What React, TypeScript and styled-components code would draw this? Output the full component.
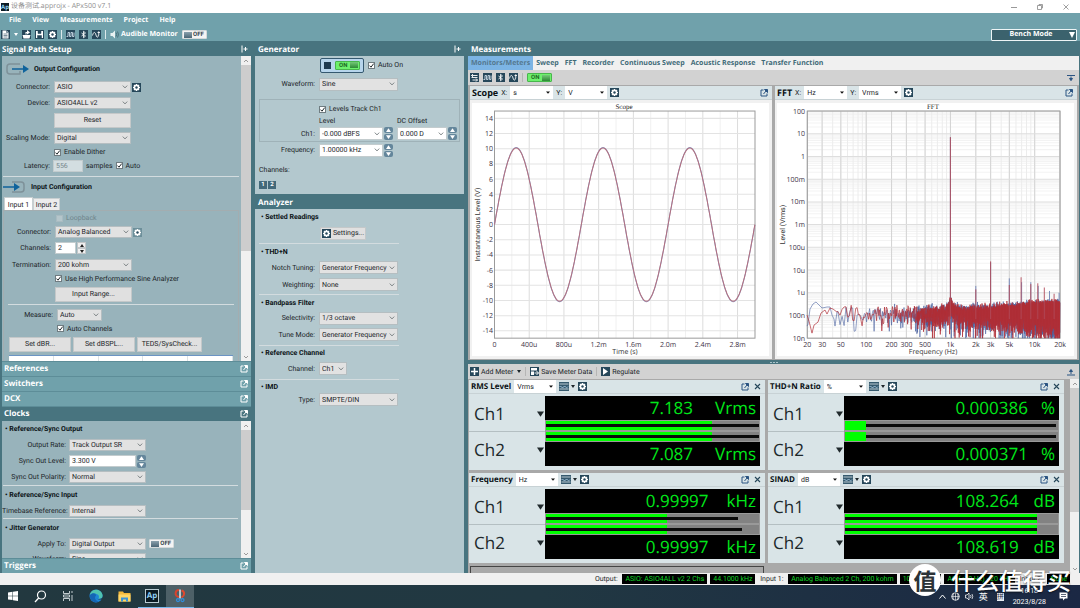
import React from 'react';
import styled, { createGlobalStyle, css } from 'styled-components';

const Global = createGlobalStyle`
  * { box-sizing: border-box; }
  html, body { margin: 0; height: 100%; }
  body {
    font-family: Roboto, "Noto Sans CJK SC", sans-serif;
    font-size: 7px;
    line-height: 10px;
    color: #1c2529;
    overflow: hidden;
    text-rendering: geometricPrecision;
  }
  button, input, select { font: inherit; color: inherit; margin: 0; text-rendering: inherit; }
`;

const boldFont = css`
  font-family: "Open Sans", "Noto Sans", sans-serif;
  font-weight: 700;
`;

/* ---------- shared shell ---------- */

const Shell = styled.div`
  position: relative;
  display: flex;
  flex-direction: column;
  height: 100vh;
  min-height: 400px;
  background: #48747f;
`;

const TitleBar = styled.header`
  display: flex;
  align-items: center;
  height: 13px;
  flex: none;
  gap: 2px;
  padding: 0 10px 0 1px;
  background: #fff;
  color: #8d8d8d;
  font-family: "Open Sans", "Noto Sans CJK SC", sans-serif;
`;

const WindowButtons = styled.div`
  display: flex;
  margin-left: auto;
  gap: 18px;
`;

const Plain = styled.button`
  display: inline-flex;
  align-items: center;
  justify-content: center;
  padding: 0;
  border: 0;
  background: none;
  flex: none;
`;

const MenuBar = styled.nav`
  display: flex;
  align-items: center;
  flex: none;
  height: 15px;
  gap: 11px;
  padding: 1px 0 0 9px;
  background: #70a1ab;
  color: #fff;
  ${boldFont}
`;

const ToolBar = styled.div`
  display: flex;
  align-items: center;
  flex: none;
  height: 13px;
  gap: 4px;
  padding: 0 3px 0 1px;
  background: #70a1ab;
  color: #fff;
  ${boldFont}
`;

const Divider = styled.i<{ $c?: string }>`
  flex: none;
  width: 1px;
  height: 9px;
  background: ${p => p.$c || '#dbe8ea'};
`;

const IconTile = styled.button<{ $s?: number; $dim?: boolean }>`
  display: inline-flex;
  flex: none;
  align-items: center;
  justify-content: center;
  width: ${p => p.$s || 9}px;
  height: ${p => p.$s || 9}px;
  padding: 0;
  border: 0;
  background: ${p => (p.$dim ? '#6d8f9a' : '#26475a')};
`;

const BenchMode = styled.button`
  display: flex;
  align-items: center;
  justify-content: center;
  position: relative;
  width: 86px;
  height: 12px;
  margin-left: auto;
  padding: 0 6px 0 0;
  border: 1px solid #eef5f6;
  border-radius: 1px;
  background: #3b626d;
  color: #fff;
  ${boldFont}
  svg { position: absolute; right: 1px; top: 2px; }
`;

const Columns = styled.main`
  display: flex;
  flex: 1;
  min-height: 0;
`;

const PanelTitle = styled.h2`
  display: flex;
  align-items: center;
  justify-content: space-between;
  flex: none;
  height: 15px;
  margin: 0;
  padding: 1px 3px 0 3px;
  color: #fff;
  font-size: 8px;
  line-height: 15px;
  ${boldFont}
`;

/* ---------- form parts ---------- */

const Row = styled.div<{ $h: number; $in?: number; $gap?: number }>`
  display: flex;
  align-items: center;
  flex: none;
  height: ${p => p.$h}px;
  padding-left: ${p => p.$in || 0}px;
  gap: ${p => p.$gap ?? 4}px;
  white-space: nowrap;
`;

const Label = styled.label<{ $w: number }>`
  flex: none;
  width: ${p => p.$w}px;
  text-align: right;
  white-space: nowrap;
`;

const GroupTitle = styled.h3<{ $h: number; $in?: number }>`
  display: flex;
  align-items: center;
  flex: none;
  gap: 5px;
  height: ${p => p.$h}px;
  margin: 0;
  padding-left: ${p => p.$in || 0}px;
  color: #0c1417;
  font-size: 7px;
  font-weight: 700;
  white-space: pre;
`;

const Rule = styled.hr<{ $w?: string; $in?: number }>`
  flex: none;
  width: ${p => p.$w || 'auto'};
  height: 1px;
  margin: 0 0 0 ${p => p.$in || 0}px;
  border: 0;
  background: #d3dcdf;
`;

const SelectBox = styled.span<{ $w: number; $h?: number; $bg?: string; $bd?: string }>`
  position: relative;
  display: inline-flex;
  flex: none;
  width: ${p => p.$w}px;
  height: ${p => p.$h || 12}px;
  select {
    appearance: none;
    width: 100%;
    padding: 1px 8px 0 2px;
    border: 1px solid ${p => p.$bd || '#b5bec1'};
    border-radius: 0;
    background: ${p => p.$bg || '#e2e2e2'};
    line-height: 9px;
  }
  svg { position: absolute; right: 3px; top: 50%; margin-top: -2px; pointer-events: none; }
`;

const TextField = styled.input<{ $w: number; $dim?: boolean }>`
  flex: none;
  width: ${p => p.$w}px;
  height: 12px;
  padding: 0 2px;
  border: 1px solid #c3ccce;
  background: ${p => (p.$dim ? '#d3dee1' : '#fff')};
  color: ${p => (p.$dim ? '#75868c' : 'inherit')};
`;

const PushButton = styled.button<{ $w: number; $h?: number }>`
  display: inline-flex;
  flex: none;
  align-items: center;
  justify-content: center;
  gap: 2px;
  width: ${p => p.$w}px;
  height: ${p => p.$h || 15}px;
  padding: 0;
  border: 1px solid #c4c8c9;
  background: #e0e0e0;
  white-space: nowrap;
`;

const CheckLabel = styled.label<{ $dim?: boolean }>`
  display: inline-flex;
  align-items: center;
  gap: 3px;
  color: ${p => (p.$dim ? '#6f858c' : 'inherit')};
  white-space: nowrap;
  span { position: relative; display: inline-flex; width: 7px; height: 7px; }
  input {
    appearance: none;
    width: 7px;
    height: 7px;
    border: 1px solid ${p => (p.$dim ? '#a9bbc1' : '#6f7c81')};
    background: ${p => (p.$dim ? '#b5c6cb' : '#fff')};
  }
  svg { position: absolute; left: 0; top: 0; pointer-events: none; }
`;

const SpinBox = styled.span<{ $light?: boolean }>`
  display: inline-flex;
  flex: none;
  flex-direction: column;
  gap: ${p => (p.$light ? 0 : 1)}px;
  width: 9px;
  button {
    display: flex;
    align-items: center;
    justify-content: center;
    width: 100%;
    height: 6px;
    padding: 0;
    border: ${p => (p.$light ? '1px solid #c2c6c8' : '0')};
    border-radius: ${p => (p.$light ? 0 : 2)}px;
    background: ${p => (p.$light ? '#f0f0f0' : '#64869b')};
    color: ${p => (p.$light ? '#222' : '#fff')};
  }
`;

const Joined = styled.span`
  display: inline-flex;
  align-items: center;
  gap: 1px;
`;

const Switch = styled.button<{ $on?: boolean }>`
  display: inline-flex;
  flex: none;
  flex-direction: ${p => (p.$on ? 'row-reverse' : 'row')};
  align-items: center;
  justify-content: space-between;
  width: 25px;
  height: 9px;
  padding: 0 ${p => (p.$on ? 1 : 2)}px 0 ${p => (p.$on ? 3 : 1)}px;
  border: 1px solid ${p => (p.$on ? '#48b64c' : '#d5dadb')};
  border-radius: 1px;
  background: ${p => (p.$on ? '#6df06d' : '#f4f4f4')};
  color: ${p => (p.$on ? '#1d6b25' : '#35454c')};
  font-family: Roboto, sans-serif;
  font-size: 6px;
  font-weight: 700;
  line-height: 7px;
  i {
    width: 8px;
    height: 6px;
    background: ${p =>
      p.$on ? 'linear-gradient(#74c878, #2c8a35)' : 'linear-gradient(#8ba1ad, #4b6676)'};
  }
`;

const Tri = ({ up, s = 4 }: { up?: boolean; s?: number }) => (
  <svg width={s} height={s - 1} viewBox="0 0 4 3" aria-hidden>
    <path d={up ? 'M0 3 2 0 4 3z' : 'M0 0h4L2 3z'} fill="currentColor" />
  </svg>
);

const Check = () => (
  <svg width="7" height="7" viewBox="0 0 7 7" aria-hidden>
    <path d="M1.5 3.6 3 5.2 5.7 1.6" fill="none" stroke="#1d2629" strokeWidth="1" />
  </svg>
);

type SelProps = {
  id: string; value: string; w: number; h?: number; bg?: string; bd?: string; solid?: boolean; label?: string;
};
const Select = ({ id, value, w, h, bg, bd, solid, label }: SelProps) => (
  <SelectBox $w={w} $h={h} $bg={bg} $bd={bd}>
    <select id={id} aria-label={label}><option>{value}</option></select>
    {solid ? (
      <svg width="4" height="3" viewBox="0 0 4 3"><path d="M0 .5h4L2 2.7z" fill="#111" /></svg>
    ) : (
      <svg width="6" height="4" viewBox="0 0 6 4">
        <path d="M.8.6 3 2.9 5.2.6" fill="none" stroke="#70787b" strokeWidth=".9" />
      </svg>
    )}
  </SelectBox>
);

const Spin = ({ light }: { light?: boolean }) => (
  <SpinBox $light={light}>
    <button aria-label="Increase"><Tri up s={light ? 4 : 5} /></button>
    <button aria-label="Decrease"><Tri s={light ? 4 : 5} /></button>
  </SpinBox>
);

const CheckBox = ({ text, off, dim }: { text: string; off?: boolean; dim?: boolean }) => (
  <CheckLabel $dim={dim}>
    <span><input type="checkbox" defaultChecked={!off} disabled={dim} />{!off && <Check />}</span>
    {text}
  </CheckLabel>
);

const Toggle = ({ on, label }: { on?: boolean; label: string }) => (
  <Switch $on={on} role="switch" aria-checked={!!on} aria-label={label}>
    <i />{on ? 'ON' : 'OFF'}
  </Switch>
);

/* ---------- icons ---------- */

const Gear = () => (
  <svg width="9" height="9" viewBox="0 0 18 18" aria-hidden>
    <g stroke="#fff" strokeWidth="3.4">
      <path d="M9 2v14M2 9h14M4.200 4.200l9.600 9.600M13.800 4.200l-9.600 9.600" />
    </g>
    <circle cx="9" cy="9" r="5.200" fill="#fff" />
    <circle cx="9" cy="9" r="2.400" fill="#26475a" />
  </svg>
);
const Square = () => (
  <svg width="9" height="9" viewBox="0 0 18 18"><path d="M1 13h3V5h3v8h3V5h3v8h3V5" fill="none" stroke="#dceaf5" strokeWidth="1.6" /></svg>
);
const Blue = () => (
  <svg width="9" height="9" viewBox="0 0 18 18"><path d="M5 6l8 6-4 3.500V2.500L13 6l-8 6" fill="none" stroke="#fff" strokeWidth="1.700" /></svg>
);
const WaveIn = () => (
  <svg width="9" height="9" viewBox="0 0 18 18"><path d="M1 11c2-8 5-8 7-1s4 5 5 0M11 5h5M13.500 2.500v8" fill="none" stroke="#fff" strokeWidth="1.700" /></svg>
);
const Swap = () => (
  <svg width="9" height="9" viewBox="0 0 18 18"><path d="M3 5h12M3 9h12M5 14h10M6 2 3 5l3 3M12 11l3 3-3 3" fill="none" stroke="#fff" strokeWidth="1.800" /></svg>
);
const PageIcon = () => (
  <svg width="9" height="9" viewBox="0 0 18 18"><path d="M3 1h8l4 4v12H3z" fill="#fff" /><path d="M11 1v4h4M5 8h8M5 11h8M5 14h8" stroke="#26475a" fill="none" strokeWidth="1.200" /></svg>
);
const OpenIcon = () => (
  <svg width="9" height="9" viewBox="0 0 18 18"><path d="M1 10h16l-2 7H3zM7 9V4h3V0l6 5-6 4V6H9v3z" fill="#fff" /></svg>
);
const SaveIcon = () => (
  <svg width="9" height="9" viewBox="0 0 18 18"><path d="M2 2h14v14H2z" fill="#fff" /><path d="M6 2v5h6V2M5 16v-5h8v5" fill="#26475a" stroke="#26475a" strokeWidth="1" /></svg>
);
const Speaker = () => (
  <svg width="9" height="9" viewBox="0 0 18 18"><path d="M1 6h4l5-5v16l-5-5H1z" fill="#e9f2f3" /><path d="M12 5q3 4 0 8M15 3q4 6 0 12" fill="none" stroke="#3b5f6a" strokeWidth="1.500" /></svg>
);
const PopOut = ({ c = '#fff' }: { c?: string }) => (
  <svg width="8" height="8" viewBox="0 0 16 16" aria-hidden>
    <path d="M7 2H2v12h12V9" fill="none" stroke={c} strokeWidth="2" />
    <path d="M9 1h6v6zM7 10l5-6" fill={c} stroke={c} strokeWidth="2" />
  </svg>
);
const Dock = () => (
  <svg width="7" height="8" viewBox="0 0 14 16" aria-hidden>
    <path d="M2 1v14M5 8h8M9 4v8" stroke="#fff" strokeWidth="2" fill="none" />
  </svg>
);
const Close = () => (
  <svg width="7" height="7" viewBox="0 0 14 14" aria-hidden><path d="M2 2l10 10M12 2 2 12" stroke="#26475a" strokeWidth="2.200" /></svg>
);
const Wavy = () => (
  <svg width="10" height="9" viewBox="0 0 20 18" aria-hidden>
    <path d="M0 0h20v18H0z" fill="#365a6e" /><path d="M1 4h18M1 14h18" stroke="#e6eef2" strokeWidth="1.500" />
    <path d="M1 10q2-4 4 0t4 0 4 0 5-1" fill="none" stroke="#b5d6ef" strokeWidth="1.600" />
  </svg>
);
const Collapse = ({ up }: { up?: boolean }) => (
  <svg width="8" height="8" viewBox="0 0 16 16" aria-hidden>
    {up ? <path d="M0 14h16M8 12V4M5 7l3-4 3 4z" stroke="#2b5482" strokeWidth="2" fill="#2b5482" />
      : <path d="M0 3h16M8 5v8M5 9l3 4 3-4z" stroke="#2b5482" strokeWidth="2" fill="#2b5482" />}
  </svg>
);
const ConfigArrow = ({ inward }: { inward?: boolean }) => (
  <svg width="23" height="12" viewBox="0 0 23 12" aria-hidden>
    {inward ? (
      <>
        <path d="M9 1h9q3 0 3 3v4q0 3-3 3H9" fill="none" stroke="#7e9199" strokeWidth="1.500" />
        <path d="M0 5.200h11V2l6 4-6 4V6.800H0z" fill="#0f639c" />
      </>
    ) : (
      <>
        <path d="M14 1H4Q1 1 1 4v4q0 3 3 3h10V8" fill="none" stroke="#7e9199" strokeWidth="1.500" />
        <path d="M6 5.200h11V2l6 4-6 4V6.800H6z" fill="#0f639c" />
      </>
    )}
  </svg>
);

/* ---------- left column ---------- */

const LeftColumn = styled.aside`
  display: flex;
  flex-direction: column;
  flex: none;
  width: 253px;
  padding: 0 2px 0 2px;
  h2:first-child { padding-left: 0; }
`;

const ScrollPane = styled.div<{ $grow: number }>`
  display: flex;
  flex: ${p => p.$grow} 1 0;
  min-height: 0;
  overflow: hidden;
  background: #98b3bb;
`;

const PaneBody = styled.div`
  display: flex;
  flex-direction: column;
  flex: 1;
  min-width: 0;
  overflow: hidden;
`;

const Track = styled.div<{ $w?: number }>`
  display: flex;
  flex-direction: column;
  flex: none;
  width: ${p => p.$w || 10}px;
  background: #f0f0f0;
  color: #9a9a9a;
`;
const TrackEnd = styled(Plain)`
  width: 100%;
  height: 9px;
`;
const Thumb = styled.i<{ $f: number }>`
  flex: ${p => p.$f} 1 0;
  background: #cdcdcd;
`;
const Rest = styled.i<{ $f: number }>`
  flex: ${p => p.$f} 1 0;
`;

const ScrollTrack = ({ thumb, rest, w }: { thumb: number; rest: number; w?: number }) => (
  <Track $w={w}>
    <TrackEnd aria-label="Scroll up"><svg width="6" height="4" viewBox="0 0 6 4"><path d="M1 3l2-2 2 2" fill="none" stroke="currentColor" /></svg></TrackEnd>
    <Thumb $f={thumb} />
    <Rest $f={rest} />
    <TrackEnd aria-label="Scroll down"><svg width="6" height="4" viewBox="0 0 6 4"><path d="M1 1l2 2 2-2" fill="none" stroke="currentColor" /></svg></TrackEnd>
  </Track>
);

const SectionBar = styled.h2<{ $open?: boolean }>`
  display: flex;
  align-items: center;
  justify-content: space-between;
  flex: none;
  height: 15px;
  margin: 0;
  padding: 0 3px 0 2px;
  border-top: 1px solid #5d8d98;
  background: ${p => (p.$open ? '#48747f' : '#70a1ab')};
  color: #fff;
  font-size: 8px;
  line-height: 14px;
  ${boldFont}
`;

const Tabs = styled.div`
  display: flex;
  align-items: flex-end;
  flex: none;
  height: 15px;
  padding-left: 2px;
`;
const InputTab = styled.button<{ $on?: boolean }>`
  height: ${p => (p.$on ? 13 : 12)}px;
  width: ${p => (p.$on ? 29 : 27)}px;
  padding: 1px 0 0;
  border: 1px solid #c8cfd1;
  border-bottom: 0;
  background: ${p => (p.$on ? '#fff' : '#ececec')};
`;
const TabPage = styled.div`
  display: flex;
  flex-direction: column;
  flex: 1;
  margin: 0 2px 0 1px;
  border: 1px solid #a3adb0;
  border-bottom: 0;
  min-height: 0;
  overflow: hidden;
`;

const MiniTable = styled.table`
  flex: none;
  width: 224px;
  height: 14px;
  margin-left: 5px;
  border-spacing: 0;
  background: #fff;
  border-top: 1px solid #6b94c4;
  td { border-right: 1px solid #dce3e6; padding: 0; }
`;

const Section = ({ name, open }: { name: string; open?: boolean }) => (
  <SectionBar $open={open}>
    {name}
    <Plain aria-label={`Open ${name}`}><PopOut /></Plain>
  </SectionBar>
);

const SignalPath = () => (
  <LeftColumn>
    <PanelTitle>Signal Path Setup<Plain aria-label="Dock panel"><Dock /></Plain></PanelTitle>
    <ScrollPane $grow={305}>
      <PaneBody>
        <Row $h={4} />
        <GroupTitle $h={18} $in={4}><ConfigArrow />Output Configuration</GroupTitle>
        <Row $h={18}><Label $w={48} htmlFor="oc">Connector:</Label><Joined><Select id="oc" value="ASIO" w={77} /><IconTile aria-label="Connector settings"><Gear /></IconTile></Joined></Row>
        <Row $h={14}><Label $w={48} htmlFor="od">Device:</Label><Select id="od" value="ASIO4ALL v2" w={77} /></Row>
        <Row $h={20} $in={52}><PushButton $w={77}>Reset</PushButton></Row>
        <Row $h={16}><Label $w={48} htmlFor="sm">Scaling Mode:</Label><Select id="sm" value="Digital" w={77} /></Row>
        <Row $h={12} $in={52}><CheckBox text="Enable Dither" /></Row>
        <Row $h={15} $gap={3}><Label $w={48} htmlFor="lat">Latency:</Label><TextField id="lat" $w={30} $dim defaultValue="556" />samples<CheckBox text="Auto" /></Row>
        <Row $h={3} />
        <Rule $w="236px" $in={1} />
        <Row $h={2} />
        <GroupTitle $h={16} $in={1}><ConfigArrow inward />Input Configuration</GroupTitle>
        <Tabs><InputTab $on>Input 1</InputTab><InputTab>Input 2</InputTab></Tabs>
        <TabPage>
          <Row $h={14} $in={52}><CheckBox text="Loopback" off dim /></Row>
          <Row $h={14}><Label $w={47} htmlFor="ic">Connector:</Label><Joined><Select id="ic" value="Analog Balanced" w={77} /><IconTile $dim aria-label="Input settings"><Gear /></IconTile></Joined></Row>
          <Row $h={18}><Label $w={47} htmlFor="ch">Channels:</Label><Joined><TextField id="ch" $w={21} defaultValue="2" /><Spin light /></Joined></Row>
          <Row $h={15}><Label $w={47} htmlFor="te">Termination:</Label><Select id="te" value="200 kohm" w={77} /></Row>
          <Row $h={13} $in={51}><CheckBox text="Use High Performance Sine Analyzer" /></Row>
          <Row $h={18} $in={51}><PushButton $w={77}>Input Range...</PushButton></Row>
          <Row $h={1} />
          <Rule $w="226px" $in={4} />
          <Row $h={19}><Label $w={49} htmlFor="me">Measure:</Label><Select id="me" value="Auto" w={45} /></Row>
          <Row $h={9} $in={53}><CheckBox text="Auto Channels" /></Row>
          <Row $h={22} $in={5} $gap={2}>
            <PushButton $w={62}>Set dBR...</PushButton>
            <PushButton $w={62}>Set dBSPL...</PushButton>
            <PushButton $w={65}>TEDS/SysCheck...</PushButton>
          </Row>
          <MiniTable><tbody><tr><td /><td /><td /><td /><td /></tr></tbody></MiniTable>
        </TabPage>
      </PaneBody>
      <ScrollTrack thumb={186} rest={101} />
    </ScrollPane>
    <Section name="References" />
    <Section name="Switchers" />
    <Section name="DCX" />
    <Section name="Clocks" open />
    <ScrollPane $grow={137}>
      <PaneBody>
        <GroupTitle $h={16} $in={3}>• Reference/Sync Output</GroupTitle>
        <Row $h={16} $gap={3}><Label $w={64} htmlFor="or">Output Rate:</Label><Select id="or" value="Track Output SR" w={77} /></Row>
        <Row $h={16} $gap={3}><Label $w={64} htmlFor="sl">Sync Out Level:</Label><Joined><TextField id="sl" $w={67} defaultValue="3.300 V" /><Spin /></Joined></Row>
        <Row $h={16} $gap={3}><Label $w={64} htmlFor="sp">Sync Out Polarity:</Label><Select id="sp" value="Normal" w={77} /></Row>
        <Rule $w="235px" $in={1} />
        <GroupTitle $h={17} $in={3}>• Reference/Sync Input</GroupTitle>
        <Row $h={15} $gap={3}><Label $w={64} htmlFor="tr">Timebase Reference:</Label><Select id="tr" value="Internal" w={77} /></Row>
        <Rule $w="235px" $in={1} />
        <GroupTitle $h={17} $in={3}>• Jitter Generator</GroupTitle>
        <Row $h={15} $gap={3}><Label $w={64} htmlFor="ap">Apply To:</Label><Select id="ap" value="Digital Output" w={77} /><Toggle label="Jitter generator" /></Row>
        <Row $h={16} $gap={3}><Label $w={64} htmlFor="wv">Waveform:</Label><Select id="wv" value="Sine" w={77} /></Row>
      </PaneBody>
      <ScrollTrack thumb={80} rest={39} />
    </ScrollPane>
    <Section name="Triggers" />
  </LeftColumn>
);

/* ---------- middle column ---------- */

const MidColumn = styled.section`
  display: flex;
  flex-direction: column;
  flex: none;
  width: 214px;
  padding: 0 3px 0 2px;
`;
const MidPane = styled.div<{ $h?: number }>`
  display: flex;
  flex-direction: column;
  flex: ${p => (p.$h ? `0 0 ${p.$h}px` : '1 1 0')};
  min-height: 0;
  overflow: hidden;
  padding-left: 4px;
  background: #b3c8ce;
`;
const GenOn = styled.div`
  display: flex;
  align-items: center;
  justify-content: space-between;
  width: 44px;
  height: 15px;
  margin-left: 61px;
  padding: 0 3px;
  border: 1px solid #35586f;
  border-radius: 2px;
  background: #b7d5ec;
  i.stop { width: 7px; height: 7px; background: #1f3c52; }
`;
const LevelBox = styled.fieldset`
  display: flex;
  flex-direction: column;
  flex: none;
  width: 201px;
  height: 43px;
  margin: 0;
  padding: 2px 0 0;
  border: 1px solid #9fb2b8;
`;
const ChannelButton = styled.button`
  width: 8px;
  height: 8px;
  padding: 0;
  border: 0;
  background: #43697a;
  color: #fff;
  font-size: 6px;
  font-weight: 700;
  line-height: 8px;
`;
const SmallHead = styled.span<{ $w: number }>`
  flex: none;
  width: ${p => p.$w}px;
`;

const white = { bg: '#fff', bd: '#c3ccce' };

const GeneratorColumn = () => (
  <MidColumn>
    <PanelTitle>Generator<Plain aria-label="Dock panel"><Dock /></Plain></PanelTitle>
    <MidPane $h={138}>
      <Row $h={18}><GenOn><i className="stop" /><Toggle on label="Generator" /></GenOn><CheckBox text="Auto On" /></Row>
      <Row $h={20}><Label $w={56} htmlFor="gw">Waveform:</Label><Select id="gw" value="Sine" w={79} h={13} /></Row>
      <Row $h={5} />
      <LevelBox>
        <Row $h={14} $in={59}><CheckBox text="Levels Track Ch1" /></Row>
        <Row $h={10} $in={59} $gap={0}><SmallHead $w={78}>Level</SmallHead>DC Offset</Row>
        <Row $h={15} $gap={4}>
          <Label $w={55} htmlFor="c1">Ch1:</Label>
          <Joined><Select id="c1" value="-0.000 dBFS" w={64} h={13} {...white} /><Spin /></Joined>
          <Joined><Select id="dc" label="DC Offset" value="0.000 D" w={50} h={13} {...white} /><Spin /></Joined>
        </Row>
      </LevelBox>
      <Row $h={16}><Label $w={56} htmlFor="fq">Frequency:</Label><Joined><Select id="fq" value="1.00000 kHz" w={64} h={13} {...white} /><Spin /></Joined></Row>
      <Row $h={23}>Channels:</Row>
      <Row $h={7} $gap={1}><ChannelButton>1</ChannelButton><ChannelButton>2</ChannelButton></Row>
    </MidPane>
    <PanelTitle>Analyzer</PanelTitle>
    <MidPane>
      <GroupTitle $h={15} $in={2}>• Settled Readings</GroupTitle>
      <Row $h={18} $in={61}><PushButton $w={46} $h={13}><IconTile as="span"><Gear /></IconTile>Settings...</PushButton></Row>
      <Row $h={1} />
      <Rule $w="140px" />
      <GroupTitle $h={15} $in={2}>• THD+N</GroupTitle>
      <Row $h={17}><Label $w={56} htmlFor="nt">Notch Tuning:</Label><Select id="nt" value="Generator Frequency" w={79} h={13} /></Row>
      <Row $h={17}><Label $w={56} htmlFor="wt">Weighting:</Label><Select id="wt" value="None" w={79} h={13} /></Row>
      <Row $h={1} />
      <Rule $w="140px" />
      <GroupTitle $h={15} $in={2}>• Bandpass Filter</GroupTitle>
      <Row $h={16}><Label $w={56} htmlFor="se">Selectivity:</Label><Select id="se" value="1/3 octave" w={79} h={13} /></Row>
      <Row $h={17}><Label $w={56} htmlFor="tm">Tune Mode:</Label><Select id="tm" value="Generator Frequency" w={79} h={13} /></Row>
      <Row $h={2} />
      <Rule $w="140px" />
      <GroupTitle $h={14} $in={2}>• Reference Channel</GroupTitle>
      <Row $h={17}><Label $w={56} htmlFor="rc">Channel:</Label><Select id="rc" value="Ch1" w={28} h={13} /></Row>
      <Row $h={2} />
      <Rule $w="140px" />
      <GroupTitle $h={13} $in={2}>• IMD</GroupTitle>
      <Row $h={13}><Label $w={56} htmlFor="ty">Type:</Label><Select id="ty" value="SMPTE/DIN" w={79} h={13} /></Row>
    </MidPane>
  </MidColumn>
);

/* ---------- charts ---------- */

const ChartSvg = styled.svg`
  display: block;
  width: 100%;
  height: 100%;
  background: #fff;
  font-family: "Open Sans", sans-serif;
  font-size: 7px;
`;

const range = (a: number, b: number, step = 1) => {
  const out: number[] = [];
  for (let v = a; v <= b + 1e-9; v += step) out.push(v);
  return out;
};

const ScopeChart = () => {
  const X = (ms: number) => 22.5 + ms * 86.8;
  const Y = (v: number) => 121 - v * 7.55;
  const wave = (d: number) =>
    range(0, 300).map(i => {
      const t = i / 100;
      return `${X(t).toFixed(1)},${(Y(10.1 * Math.sin(2 * Math.PI * t)) + d * Math.sign(-Math.sin(2 * Math.PI * t))).toFixed(1)}`;
    }).join(' ');
  const ticks = ['0', '400u', '800u', '1.2m', '1.6m', '2.0m', '2.4m', '2.8m'];
  return (
    <ChartSvg viewBox="0 0 297 252" preserveAspectRatio="none" role="img" aria-label="Scope">
      {range(0, 14).map(i => (
        <line key={i} x1={X(i * 0.2)} x2={X(i * 0.2)} y1="8" y2="234" stroke={i % 2 ? '#f0f0f0' : '#dcdcdc'} />
      ))}
      {range(-14, 14, 2).map(v => <line key={v} x1="22" x2="283" y1={Y(v)} y2={Y(v)} stroke="#e3e3e3" />)}
      <rect x="22.500" y="8" width="260.500" height="226" fill="none" stroke="#9b9b9b" />
      <polyline points={wave(0.4)} fill="none" stroke="#8a9cc8" />
      <polyline points={wave(0)} fill="none" stroke="#b5707e" />
      {range(-14, 14, 2).map(v => <text key={v} x="21" y={Y(v) + 2.5} textAnchor="end" fill="#3c3144">{v}</text>)}
      {ticks.map((t, i) => <text key={t} x={X(i * 0.4)} y="243" textAnchor="middle" fill="#3c3144">{t}</text>)}
      <text x="153" y="250" textAnchor="middle" fill="#333">Time (s)</text>
      <text transform="translate(8 121) rotate(-90)" textAnchor="middle" fill="#333" fontFamily="Roboto, sans-serif">Instantaneous Level (V)</text>
      <text x="152" y="6" textAnchor="middle" fill="#222" fontFamily="Liberation Serif, serif">Scope</text>
    </ChartSvg>
  );
};

const fx = (f: number) => 30.3 + Math.log10(f / 20) * 84.25;
const fy = (v: number) => Math.min(234, 8 + (2 - Math.log10(v)) * 22.6);

const spectrum = (seed: number, head: number[][], peaks: number[][]) => {
  let s = seed;
  const rnd = () => {
    s = (s * 1664525 + 1013904223) % 4294967296;
    return (s + 1) / 4294967297;
  };
  const ray = (k: number) => k * Math.sqrt(-Math.log(rnd()));
  const pts = head.map(p => p.join(','));
  for (let f = 46; f < 400; f += 2.9) {
    pts.push(`${fx(f).toFixed(1)},${fy(Math.max(ray(1.3e-7), 2e-8)).toFixed(1)}`);
  }
  for (let x = fx(400); x < 283; x += 0.3) {
    const f = 20 * Math.pow(10, (x - 30.3) / 84.25);
    const near = Math.abs(x - fx(1000));
    const k = 1.25e-7 * (1 + 1.6 * Math.exp(-near / 3)) * (1 + Math.min(f / 20000, 0.5));
    const n = Math.max(1, Math.round((f * 0.0082) / 2.9));
    let hi = 0;
    let lo = 1;
    for (let i = 0; i < n + 1; i++) {
      const v = ray(k);
      hi = Math.max(hi, v);
      lo = Math.min(lo, v);
    }
    pts.push(`${x.toFixed(1)},${fy(hi).toFixed(1)}`, `${x.toFixed(1)},${fy(Math.max(lo, 1e-8)).toFixed(1)}`);
  }
  const spikes = peaks.map(([f, v]) => `M${fx(f).toFixed(1)} 215V${fy(v).toFixed(1)}`).join('');
  return { line: pts.join(' '), spikes };
};

const blueTrace = spectrum(7,
  [[30, 222], [31, 220], [33, 205], [36, 200], [39, 198], [42, 201], [45, 204], [50, 203], [53, 203], [55, 211], [57, 215], [58, 222], [60, 208]],
  [[1000, 7.1], [2000, 2e-6], [3000, 2.2e-5], [5000, 4.3e-6], [7000, 2.9e-6], [9000, 2.9e-6], [11000, 2e-6], [15000, 1.2e-6], [19500, 1e-6]]);
const redTrace = spectrum(91,
  [[30, 211], [32, 217], [35, 229], [37, 221], [41, 218], [44, 209], [48, 206], [50, 210], [53, 204], [56, 205], [60, 208]],
  [[1000, 7.1], [2000, 1.4e-6], [3000, 2.4e-5], [5000, 2.2e-6], [6900, 4.8e-6], [9000, 2.4e-6], [10900, 2.6e-6], [13000, 1.7e-6], [17000, 9e-7]]);

const FftChart = () => {
  const yl = ['100', '10', '1', '100m', '10m', '1m', '100u', '10u', '1u', '100n', '10n'];
  const xl: [number, string][] = [[20, '20'], [30, '30'], [50, '50'], [100, '100'], [200, '200'], [300, '300'], [500, '500'], [1000, '1k'], [2000, '2k'], [3000, '3k'], [5000, '5k'], [10000, '10k'], [20000, '20k']];
  const minor = [10, 100, 1000].flatMap(d => range(2, 10).map(m => m * d)).concat([20000]);
  return (
    <ChartSvg viewBox="0 0 297 252" preserveAspectRatio="none" role="img" aria-label="FFT">
      {yl.slice(0, 10).map((_, i) => range(2, 9).map(m => {
        const y = 8 + (i + 1 - Math.log10(m)) * 22.6;
        return <line key={`${i}-${m}`} x1="30" x2="283" y1={y} y2={y} stroke="#f3f3f3" />;
      }))}
      {minor.map(f => <line key={f} x1={fx(f)} x2={fx(f)} y1="8" y2="234" stroke="#ececec" />)}
      {xl.map(([f]) => <line key={f} x1={fx(f)} x2={fx(f)} y1="8" y2="234" stroke="#d4d4d4" />)}
      {yl.map((t, i) => <line key={t} x1="30" x2="283" y1={8 + i * 22.6} y2={8 + i * 22.6} stroke="#dedede" />)}
      <rect x="30.300" y="8" width="252.700" height="226" fill="none" stroke="#9b9b9b" />
      <polyline points={blueTrace.line} fill="none" stroke="#4a62a0" strokeWidth=".6" />
      <path d={blueTrace.spikes} stroke="#6f82b5" strokeWidth=".9" />
      <polyline points={redTrace.line} fill="none" stroke="#b02f38" strokeWidth=".7" />
      <path d={redTrace.spikes} stroke="#b04a58" strokeWidth=".9" />
      {yl.map((t, i) => <text key={t} x="28" y={10.5 + i * 22.6} textAnchor="end" fill="#3c3144">{t}</text>)}
      {xl.map(([f, t]) => <text key={t} x={fx(f)} y="243" textAnchor="middle" fill="#3c3144">{t}</text>)}
      <text x="156" y="250" textAnchor="middle" fill="#333">Frequency (Hz)</text>
      <text transform="translate(8 121) rotate(-90)" textAnchor="middle" fill="#333" fontFamily="Roboto, sans-serif">Level (Vrms)</text>
      <text x="156" y="6" textAnchor="middle" fill="#222" fontFamily="Liberation Serif, serif">FFT</text>
    </ChartSvg>
  );
};

/* ---------- right column ---------- */

const RightColumn = styled.section`
  display: flex;
  flex-direction: column;
  flex: 1;
  min-width: 0;
  padding: 0 1px;
`;
const MeasureTabs = styled.nav`
  display: flex;
  flex: none;
  height: 14px;
  background: #f0f0f0;
`;
const MeasureTab = styled.a<{ $on?: boolean }>`
  padding: 0 3px;
  background: ${p => (p.$on ? '#7cb4e4' : 'transparent')};
  color: ${p => (p.$on ? '#54788f' : '#3f6b78')};
  line-height: 15px;
  text-decoration: none;
  white-space: nowrap;
  ${boldFont}
`;
const GreyBar = styled.div<{ $h: number }>`
  display: flex;
  align-items: center;
  flex: none;
  gap: 4px;
  height: ${p => p.$h}px;
  padding: 0 4px 0 2px;
  background: #d2d2d2;
`;
const Right = styled.span`
  display: inline-flex;
  align-items: center;
  gap: 5px;
  margin-left: auto;
`;
const Graphs = styled.div`
  display: flex;
  flex: 275 1 0;
  min-height: 0;
  gap: 3px;
  padding: 1px 2px;
  background: #a9a9a9;
`;
const GraphPanel = styled.article`
  display: flex;
  flex-direction: column;
  flex: 1;
  min-width: 0;
  background: #f1f1f1;
`;
const GraphBody = styled.div`
  flex: 1;
  min-height: 0;
  padding: 3px 3px 3px 2px;
`;
const CardHead = styled.div`
  display: flex;
  align-items: center;
  flex: none;
  gap: 3px;
  height: 14px;
  padding: 0 4px 0 2px;
  border-bottom: 1px solid #c8d2d5;
  background: #d9e4e7;
`;
const CardTitle = styled.h3<{ $big?: boolean }>`
  margin: 0;
  color: #0a1114;
  font-size: ${p => (p.$big ? 9 : 8)}px;
  line-height: 12px;
  white-space: nowrap;
  ${boldFont}
`;
const Splitter = styled.div`
  display: flex;
  align-items: center;
  justify-content: center;
  flex: none;
  height: 4px;
  gap: 1px;
  i { width: 2px; height: 1px; background: #a9c3ca; }
`;
const MeterButton = styled(Plain)`
  gap: 2px;
  white-space: nowrap;
`;
const MetersArea = styled.div`
  display: flex;
  flex: 195 1 0;
  min-height: 0;
  overflow: hidden;
  background: #a9a9a9;
`;
const MeterGrid = styled.div`
  display: grid;
  flex: 1;
  grid-template-columns: 1fr 1fr;
  grid-auto-rows: 90px;
  gap: 3px;
  padding: 1px 6px 0 1px;
`;
const MeterCard = styled.article`
  display: flex;
  flex-direction: column;
  background: #d9e4e7;
`;
const EmptyCard = styled.div`
  height: 30px;
  margin: 0 1px;
  border: 1px solid #454545;
`;
const MeterBody = styled.div`
  display: grid;
  grid-template-columns: 76px 1fr;
  flex: 1;
  padding: 2px 5px 0 0;
`;
const Names = styled.div`
  display: grid;
  grid-template-rows: 36px 35px;
`;
const ChannelName = styled.div`
  display: flex;
  align-items: center;
  justify-content: space-between;
  padding: 0 1px 0 5px;
  color: #20292c;
  font-family: "Open Sans", sans-serif;
  font-size: 17px;
  line-height: 24px;
  &:first-child { border-bottom: 1px solid #b4bfc2; }
`;
const Displays = styled.div`
  display: flex;
  flex-direction: column;
  height: 70px;
  background: #c9d0d2;
`;
const Reading = styled.output<{ $gap: number }>`
  display: flex;
  align-items: center;
  justify-content: flex-end;
  gap: ${p => p.$gap}px;
  height: 24px;
  padding-right: 4px;
  background: #000;
  color: #00e81a;
  font-family: "Open Sans", sans-serif;
  font-size: 17px;
  line-height: 24px;
  white-space: nowrap;
`;
const Gauge = styled.div`
  position: relative;
  height: 11px;
  border: 1px solid #999;
  background: #828282;
`;
const Fill = styled.i`
  position: absolute;
  left: 0;
  top: 0;
  bottom: 0;
  background: #00ff00;
`;
const Needle = styled.i`
  position: absolute;
  top: 3px;
  height: 3px;
  background: #0a0a0a;
`;

type MeterData = {
  name: string; unit: string; show: string; gap: number; a: string; b: string;
  fill: number; from: number; to: [number, number];
};
const meters: MeterData[] = [
  { name: 'RMS Level', unit: 'Vrms', show: 'Vrms', gap: 22, a: '7.183', b: '7.087', fill: 78, from: 0, to: [100, 100] },
  { name: 'THD+N Ratio', unit: '%', show: '%', gap: 13, a: '0.000386', b: '0.000371', fill: 10, from: 10, to: [99, 99] },
  { name: 'Frequency', unit: 'Hz', show: 'kHz', gap: 18, a: '0.99997', b: '0.99997', fill: 57, from: 0, to: [90, 92] },
  { name: 'SINAD', unit: 'dB', show: 'dB', gap: 15, a: '108.264', b: '108.619', fill: 90, from: 0, to: [90, 90] },
];

const Bar = ({ m, to }: { m: MeterData; to: number }) => (
  <Gauge>
    <Fill style={{ width: `${m.fill}%` }} />
    <Needle style={{ left: `${m.from}%`, width: `${to - m.from}%` }} />
  </Gauge>
);

const Meter = ({ m }: { m: MeterData }) => (
  <MeterCard>
    <CardHead>
      <CardTitle>{m.name}</CardTitle>
      <Select id={`u-${m.name}`} label={`${m.name} unit`} value={m.unit} w={42} h={13} bg="#fff" bd="#fff" solid />
      <MeterButton aria-label="Display"><Wavy /><Tri s={4} /></MeterButton>
      <IconTile aria-label={`${m.name} settings`}><Gear /></IconTile>
      <Right>
        <Plain aria-label="Pop out"><PopOut c="#2b5482" /></Plain>
        <Plain aria-label="Close"><Close /></Plain>
      </Right>
    </CardHead>
    <MeterBody>
      <Names>
        <ChannelName>Ch1<Tri s={7} /></ChannelName>
        <ChannelName>Ch2<Tri s={7} /></ChannelName>
      </Names>
      <Displays>
        <Reading $gap={m.gap}><span>{m.a}</span><span>{m.show}</span></Reading>
        <Bar m={m} to={m.to[0]} />
        <Bar m={m} to={m.to[1]} />
        <Reading $gap={m.gap}><span>{m.b}</span><span>{m.show}</span></Reading>
      </Displays>
    </MeterBody>
  </MeterCard>
);

const Graph = ({ name, x, y, children }: { name: string; x: string; y: string; children: React.ReactNode }) => (
  <GraphPanel>
    <CardHead>
      <CardTitle $big>{name}</CardTitle>
      <label htmlFor={`${name}-x`}>X:</label>
      <Select id={`${name}-x`} value={x} w={43} h={13} bg="#fff" bd="#fff" solid />
      <label htmlFor={`${name}-y`}>Y:</label>
      <Select id={`${name}-y`} value={y} w={42} h={13} bg="#fff" bd="#fff" solid />
      <IconTile aria-label={`${name} settings`}><Gear /></IconTile>
      <Right><Plain aria-label="Pop out"><PopOut c="#2b5482" /></Plain></Right>
    </CardHead>
    <GraphBody>{children}</GraphBody>
  </GraphPanel>
);

const tabs = ['Monitors/Meters', 'Sweep', 'FFT', 'Recorder', 'Continuous Sweep', 'Acoustic Response', 'Transfer Function'];

const Measurements = () => (
  <RightColumn>
    <PanelTitle>Measurements</PanelTitle>
    <MeasureTabs>{tabs.map((t, i) => <MeasureTab key={t} href="#" $on={i === 0}>{t}</MeasureTab>)}</MeasureTabs>
    <GreyBar $h={15}>
      <IconTile aria-label="Signal path"><Swap /></IconTile>
      <IconTile aria-label="Generator"><Square /></IconTile>
      <IconTile aria-label="Bluetooth"><Blue /></IconTile>
      <IconTile aria-label="Waveform"><WaveIn /></IconTile>
      <Divider $c="#b5b5b5" />
      <Toggle on label="Monitors" />
      <Right><Plain aria-label="Collapse graphs"><Collapse /></Plain></Right>
    </GreyBar>
    <Graphs>
      <Graph name="Scope" x="s" y="V"><ScopeChart /></Graph>
      <Graph name="FFT" x="Hz" y="Vrms"><FftChart /></Graph>
    </Graphs>
    <Splitter><i /><i /><i /></Splitter>
    <GreyBar $h={15}>
      <MeterButton>
        <IconTile as="span"><svg width="7" height="7" viewBox="0 0 7 7"><path d="M3.500 0v7M0 3.500h7" stroke="#fff" strokeWidth="1.500" /></svg></IconTile>
        Add Meter&nbsp;<Tri s={4} />
      </MeterButton>
      <Divider $c="#b5b5b5" />
      <MeterButton>
        <IconTile as="span"><svg width="9" height="9" viewBox="0 0 18 18"><path d="M2 2h12v5H2zM2 9h6v7H2z" fill="#fff" /><path d="M9 12h8M13 8l4 4-4 4" stroke="#fff" strokeWidth="1.800" fill="none" /></svg></IconTile>
        Save Meter Data
      </MeterButton>
      <Divider $c="#b5b5b5" />
      <MeterButton>
        <IconTile as="span"><svg width="5" height="7" viewBox="0 0 5 7"><path d="M0 0 5 3.500 0 7z" fill="#fff" /></svg></IconTile>
        Regulate
      </MeterButton>
      <Right><Plain aria-label="Collapse meters"><Collapse up /></Plain></Right>
    </GreyBar>
    <MetersArea>
      <MeterGrid>
        {meters.map(m => <Meter key={m.name} m={m} />)}
        <EmptyCard />
      </MeterGrid>
      <ScrollTrack thumb={125} rest={52} w={9} />
    </MetersArea>
  </RightColumn>
);

/* ---------- bottom bars ---------- */

const StatusBar = styled.footer`
  display: flex;
  align-items: center;
  justify-content: flex-end;
  flex: none;
  height: 12px;
  gap: 3px;
  padding-right: 10px;
  background: #f0f0f0;
  white-space: nowrap;
`;
const StatusTag = styled.span`
  height: 10px;
  padding: 0 3px;
  background: #000;
  color: #10d626;
  line-height: 10px;
`;
const TaskBar = styled.footer`
  display: flex;
  flex: none;
  height: 23px;
  padding-right: 12px;
  background: linear-gradient(90deg, #22383f 0%, #213842 50%, #1b2844 100%);
  color: #fff;
`;
const TaskButton = styled.button<{ $open?: boolean; $active?: boolean }>`
  display: flex;
  align-items: center;
  justify-content: center;
  width: 28px;
  padding: 0;
  border: 0;
  border-bottom: 1px solid ${p => (p.$open ? '#76b9ed' : 'transparent')};
  background: ${p => (p.$active ? '#4d6067' : 'transparent')};
  &:first-child { width: 26px; }
`;
const Tray = styled.div`
  display: flex;
  align-items: center;
  gap: 5px;
  margin-left: auto;
`;
const ImeMark = styled.span<{ $boxed?: boolean }>`
  font-family: "Noto Sans CJK SC", sans-serif;
  font-size: ${p => (p.$boxed ? 7 : 9)}px;
  line-height: 8px;
  background: ${p => (p.$boxed ? '#e8edf2' : 'transparent')};
  color: ${p => (p.$boxed ? '#1b2844' : '#fff')};
  margin-left: ${p => (p.$boxed ? 4 : 0)}px;
`;
const Clock = styled.time`
  margin: 0 8px 0 4px;
  line-height: 11px;
  text-align: center;
`;
const Watermark = styled.div`
  position: absolute;
  right: 9px;
  bottom: 12px;
  display: flex;
  align-items: center;
  gap: 10px;
  color: #fff;
  font-family: "Noto Sans CJK SC", sans-serif;
  font-size: 24px;
  font-weight: 500;
  line-height: 32px;
  text-shadow: 0 1px 2px rgba(0, 0, 0, 0.6);
  pointer-events: none;
`;
const Seal = styled.b`
  display: flex;
  align-items: center;
  justify-content: center;
  width: 32px;
  height: 32px;
  border-radius: 50%;
  background: #fff;
  color: #2b3338;
  font-size: 23px;
  text-shadow: none;
`;
const AppBadge = styled.span<{ $s: number }>`
  display: inline-flex;
  align-items: center;
  justify-content: center;
  width: ${p => p.$s}px;
  height: ${p => p.$s}px;
  border: ${p => (p.$s > 10 ? '1px solid #b9cbd2' : '0')};
  background: #0b1a22;
  color: #8fd0f2;
  font-size: ${p => (p.$s > 10 ? 8 : 6)}px;
  line-height: 8px;
  ${boldFont}
`;

export default function App() {
  return (
    <Shell>
      <Global />
      <TitleBar>
        <AppBadge $s={8}>Ap</AppBadge>设备测试.approjx - APx500 v7.1
        <WindowButtons>
          <Plain aria-label="Minimize"><svg width="8" height="8" viewBox="0 0 8 8"><path d="M1 4.500h6" stroke="#999" /></svg></Plain>
          <Plain aria-label="Restore"><svg width="8" height="8" viewBox="0 0 8 8"><path d="M1.500 2.500h4v4h-4zM3 2.500v-1h3.500V5h-1" stroke="#888" strokeWidth=".8" fill="none" /></svg></Plain>
          <Plain aria-label="Close"><svg width="8" height="8" viewBox="0 0 8 8"><path d="M1.500 1.500l5 5M6.500 1.500l-5 5" stroke="#888" strokeWidth=".8" /></svg></Plain>
        </WindowButtons>
      </TitleBar>
      <MenuBar>{['File', 'View', 'Measurements', 'Project', 'Help'].map(m => <span key={m}>{m}</span>)}</MenuBar>
      <ToolBar>
        <IconTile aria-label="New"><PageIcon /></IconTile><Tri />
        <IconTile aria-label="Open"><OpenIcon /></IconTile>
        <IconTile aria-label="Save"><SaveIcon /></IconTile>
        <IconTile aria-label="Settings"><Gear /></IconTile>
        <Divider />
        <IconTile aria-label="Generator"><Square /></IconTile>
        <IconTile aria-label="Bluetooth"><Blue /></IconTile>
        <IconTile aria-label="Waveform"><WaveIn /></IconTile>
        <Divider />
        <MeterButton as="span"><Speaker />Audible Monitor</MeterButton>
        <Toggle label="Audible monitor" />
        <BenchMode>Bench Mode<svg width="6" height="6" viewBox="0 0 6 6"><path d="M0 0h6L3 6z" fill="#fff" /></svg></BenchMode>
      </ToolBar>
      <Columns>
        <SignalPath />
        <GeneratorColumn />
        <Measurements />
      </Columns>
      <StatusBar>
        Output:&nbsp;<StatusTag>ASIO: ASIO4ALL v2 2 Chs</StatusTag><StatusTag>44.1000 kHz</StatusTag>
        &nbsp;Input 1:&nbsp;<StatusTag>Analog Balanced 2 Ch, 200 kohm</StatusTag><StatusTag>10.00 Vrms</StatusTag>
        <StatusTag>AC (&lt;10 Hz) - 20 kHz</StatusTag>&nbsp;Input 2:&nbsp;<StatusTag>None</StatusTag>
      </StatusBar>
      <TaskBar>
        <TaskButton aria-label="Start"><svg width="10" height="10" viewBox="0 0 10 10"><path d="M0 1.400 4.500.8v3.900H0zM5 .7 10 0v4.700H5zM0 5.200h4.500v3.900L0 8.500zM5 5.200h5V10L5 9.200z" fill="#fff" /></svg></TaskButton>
        <TaskButton aria-label="Search"><svg width="13" height="13" viewBox="0 0 13 13"><circle cx="7.500" cy="5" r="4" fill="none" stroke="#fff" strokeWidth="1.200" /><path d="M4.700 8 1 12" stroke="#fff" strokeWidth="1.300" /></svg></TaskButton>
        <TaskButton aria-label="Task view"><svg width="10" height="10" viewBox="0 0 10 10"><path d="M.5 0v2.500h6V0M.5 10V7.500h6V10M.5 4h6v2h-6zM9 0v2M9 4v6" fill="none" stroke="#d4dde0" strokeWidth=".9" /></svg></TaskButton>
        <TaskButton aria-label="Edge">
          <svg width="14" height="14" viewBox="0 0 28 28">
            <circle cx="14" cy="14" r="13" fill="#1e86d6" />
            <path d="M2 10C5-1 24-2 27 12c1 6-4 8-8 7 2-3 1-8-4-9C9 8 4 9 2 14z" fill="#4fc3b0" />
            <path d="M2 12c4-5 12-4 12 1-4 3-2 11 6 12-9 5-20-3-18-13z" fill="#1565b4" />
            <path d="M14 13c-2 4 1 7 5 7 3 0 6-1 7-2l-1 3c-6 1-14-2-11-8z" fill="#22383f" />
          </svg>
        </TaskButton>
        <TaskButton aria-label="Files">
          <svg width="13" height="11" viewBox="0 0 26 22"><path d="M1 1h9l2 3h13v17H1z" fill="#f5b93c" /><path d="M1 7h24v14H1z" fill="#ffd768" /><path d="M6 21v-8h14v8h-4v-4h-6v4z" fill="#3d94d8" /></svg>
        </TaskButton>
        <TaskButton $open aria-label="APx500"><AppBadge $s={14}>Ap</AppBadge></TaskButton>
        <TaskButton $open $active aria-label="Snip">
          <svg width="12" height="14" viewBox="0 0 24 28"><path d="M10 2C2 2 0 14 10 16" fill="none" stroke="#d8432e" strokeWidth="4" /><path d="M12 1v18" stroke="#e8edf0" strokeWidth="3" /><path d="M15 3c7 2 7 10 0 14" fill="none" stroke="#e0492f" strokeWidth="4" /><circle cx="8" cy="22" r="3" fill="none" stroke="#2f8fe0" strokeWidth="2.500" /><circle cx="17" cy="22" r="3" fill="none" stroke="#2f8fe0" strokeWidth="2.500" /></svg>
        </TaskButton>
        <Tray>
          <svg width="7" height="5" viewBox="0 0 7 5"><path d="M.5 4.500l3-3.500 3 3.500" fill="none" stroke="#fff" /></svg>
          <svg width="9" height="9" viewBox="0 0 9 9"><circle cx="4.500" cy="4.500" r="3.800" fill="none" stroke="#fff" strokeWidth=".8" /><path d="M.7 4.500h7.600M4.500.7v7.600M2.600 1.300q-1.500 3 0 6.400M6.400 1.300q1.500 3 0 6.400" fill="none" stroke="#fff" strokeWidth=".6" /></svg>
          <svg width="9" height="9" viewBox="0 0 18 18"><path d="M1 6h3l4-4v14l-4-4H1z" fill="none" stroke="#fff" strokeWidth="1.500" /><path d="M11 6q2 3 0 6M14 4q3 5 0 10" fill="none" stroke="#fff" strokeWidth="1.500" /></svg>
          <ImeMark>英</ImeMark>
          <ImeMark $boxed>拼</ImeMark>
          <Clock>16:18<br />2023/8/28</Clock>
          <svg width="9" height="9" viewBox="0 0 9 9"><path d="M.5.500h8v6H6l-2 2v-2H.5z" fill="#fff" /><path d="M2 2.500h5M2 4.500h5" stroke="#1b2844" strokeWidth=".7" /></svg>
        </Tray>
      </TaskBar>
      <Watermark><Seal>值</Seal>什么值得买</Watermark>
    </Shell>
  );
}
